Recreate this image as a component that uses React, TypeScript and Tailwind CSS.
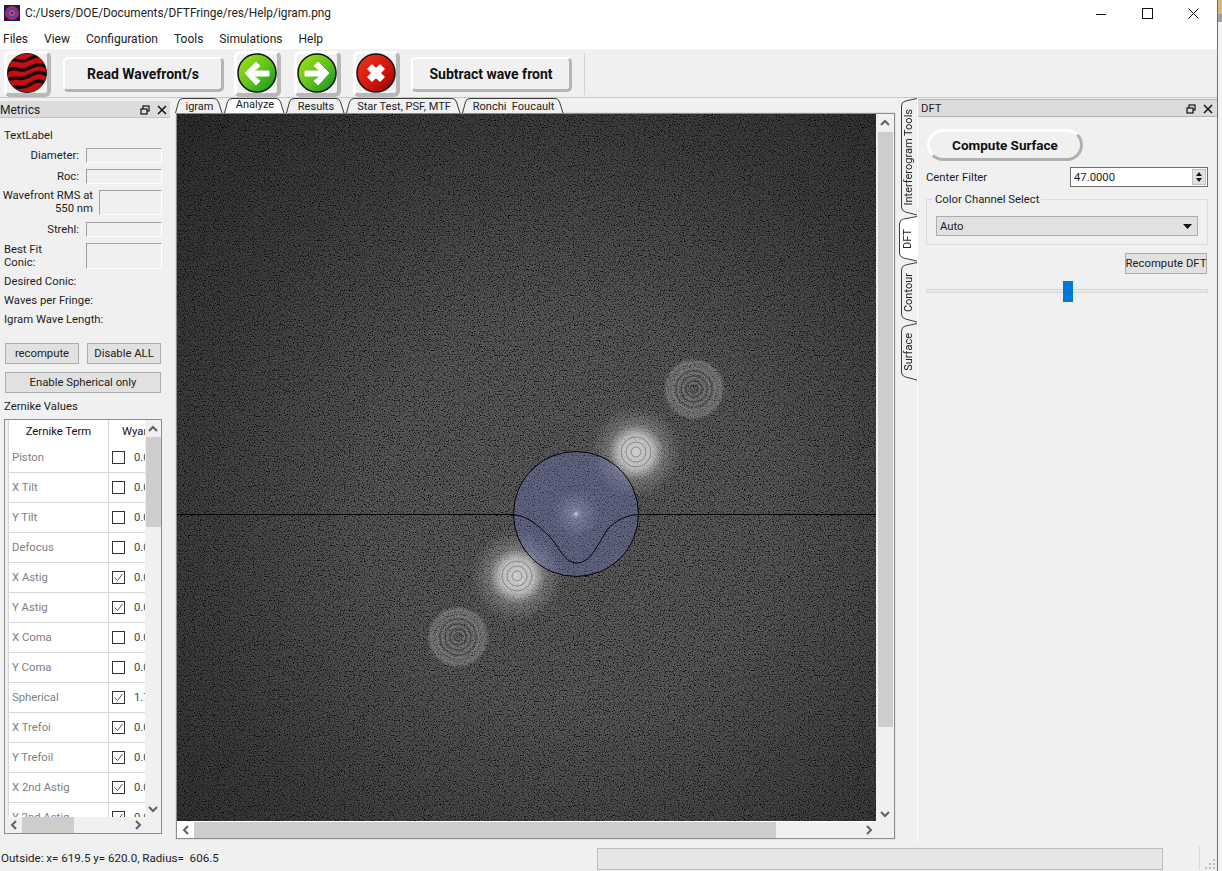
import React from "react";

const tabs = [
  { label: "igram", w: 49, cls: "w-[49px]" },
  { label: "Analyze", w: 62, cls: "w-[62px]", active: true },
  { label: "Results", w: 60, cls: "w-[60px]" },
  { label: "Star Test, PSF, MTF", w: 116, cls: "w-[116px]" },
  { label: "Ronchi  Foucault", w: 103, cls: "w-[103px]" },
];

const sideTabs = [
  { label: "Interferogram Tools", h: 118, cls: "h-[118px]" },
  { label: "DFT", h: 46, cls: "h-[46px]", active: true },
  { label: "Contour", h: 61, cls: "h-[61px]" },
  { label: "Surface", h: 58, cls: "h-[58px]" },
];

const zernike = [
  { name: "Piston", val: "0.0000", on: false },
  { name: "X Tilt", val: "0.0000", on: false },
  { name: "Y Tilt", val: "0.0000", on: false },
  { name: "Defocus", val: "0.0000", on: false },
  { name: "X Astig", val: "0.0000", on: true },
  { name: "Y Astig", val: "0.0000", on: true },
  { name: "X Coma", val: "0.0000", on: false },
  { name: "Y Coma", val: "0.0000", on: false },
  { name: "Spherical", val: "1.7000", on: true },
  { name: "X Trefoi", val: "0.0000", on: true },
  { name: "Y Trefoil", val: "0.0000", on: true },
  { name: "X 2nd Astig", val: "0.0000", on: true },
  { name: "Y 2nd Astig", val: "0.0000", on: true },
];

const Chevron = ({ dir }: { dir: "up" | "down" | "left" | "right" }) => {
  const pts = {
    up: "1,7 5,3 9,7",
    down: "1,3 5,7 9,3",
    left: "7,1 3,5 7,9",
    right: "3,1 7,5 3,9",
  }[dir];
  return (
    <svg width="10" height="10" viewBox="0 0 10 10" className="shrink-0">
      <polyline points={pts} fill="none" stroke="#606060" strokeWidth="2" />
    </svg>
  );
};

const DockIcons = () => (
  <div className="flex items-center gap-[7px]">
    <svg width="10" height="10" viewBox="0 0 10 10">
      <rect x="3" y="1" width="6" height="5" fill="none" stroke="#111" strokeWidth="1.2" />
      <rect x="1" y="4" width="6" height="5" fill="#dcdcdc" stroke="#111" strokeWidth="1.2" />
    </svg>
    <svg width="10" height="10" viewBox="0 0 10 10">
      <path d="M1,1 L9,9 M9,1 L1,9" stroke="#111" strokeWidth="1.5" />
    </svg>
  </div>
);

const Tab = (props: { label: string; w: number; cls: string; active?: boolean }) => {
  const w = props.w;
  return (
    <div className={`relative h-[15px] shrink-0 ${props.cls}`}>
      <svg className="absolute inset-0" width={w} height="15" viewBox={`0 0 ${w} 15`}>
        <path
          d={`M0.5,15 L3.5,4 Q4.5,0.5 8,0.5 L${w - 10},0.5 Q${w - 6.5},0.5 ${w - 5.5},4 L${w - 2},15`}
          fill={props.active ? "#ffffff" : "#f0f0f0"}
          stroke="#3c3c3c"
        />
      </svg>
      <div
        className={`absolute inset-0 flex justify-center text-[11px] whitespace-pre text-[#222] ${
          props.active ? "leading-[14px]" : "leading-[18px]"
        }`}
      >
        {props.label}
      </div>
    </div>
  );
};

const SideTab = (props: { label: string; h: number; cls: string; active?: boolean }) => {
  const h = props.h;
  const x = props.active ? 0.5 : 2.5;
  return (
    <div className={`relative w-[18px] shrink-0 ${props.cls}`}>
      <svg className="absolute inset-0" width="18" height={h} viewBox={`0 0 18 ${h}`}>
        <path
          d={`M18,0.5 L${x + 4},3 Q${x},4 ${x},8 L${x},${h - 9} Q${x},${h - 5} ${x + 4},${h - 4} L18,${h - 1}`}
          fill={props.active ? "#ffffff" : "#f0f0f0"}
          stroke="#3c3c3c"
        />
      </svg>
      <div
        className={`absolute inset-0 flex items-center justify-center text-[11px] text-[#222] ${
          props.active ? "" : "pl-[2px]"
        }`}
      >
        <span className="[writing-mode:vertical-rl] rotate-180 whitespace-nowrap">{props.label}</span>
      </div>
    </div>
  );
};

const Field = ({ cls }: { cls: string }) => (
  <div className={`border-t border-l border-t-[#a0a0a0] border-l-[#a0a0a0] border-b border-r border-b-white border-r-white bg-[#f0f0f0] shrink-0 ${cls}`} />
);

const PushButton = ({ label, cls }: { label: string; cls: string }) => (
  <div className={`flex items-center justify-center h-[21px] bg-[#e1e1e1] border border-[#adadad] text-[#222] whitespace-nowrap ${cls}`}>
    {label}
  </div>
);

const TextTool = ({ label, cls }: { label: string; cls: string }) => (
  <div
    className={`flex items-center justify-center h-[35px] mt-[1px] bg-[#f0f0f0] rounded-[5px] border-t-2 border-l-2 border-t-white border-l-white border-b-[3px] border-r-[3px] border-b-[#b4b4b4] border-r-[#b4b4b4] font-bold text-[14px] text-[#111] ${cls}`}
  >
    {label}
  </div>
);

const IconTool = ({ children }: { children: React.ReactNode }) => (
  <div className="flex items-center justify-center w-[47px] h-[46px] shrink-0 bg-[#f0f0f0] rounded-[6px] border-t-[3px] border-l-[3px] border-t-white border-l-white border-b-[4px] border-r-[4px] border-b-[#b8b8b8] border-r-[#b8b8b8]">
    {children}
  </div>
);

const WaveIcon = () => (
  <svg width="40" height="40" viewBox="0 0 40 40">
    <defs>
      <clipPath id="waveClip">
        <circle cx="20" cy="20" r="19.5" />
      </clipPath>
    </defs>
    <g clipPath="url(#waveClip)">
      <rect width="40" height="40" fill="#c80c10" />
      <path d="M0,9 C8,3 12,11 20,7 S32,1 40,5" stroke="#140404" strokeWidth="3" fill="none" />
      <path d="M0,18 C8,12 12,20 20,16 S32,10 40,14" stroke="#140404" strokeWidth="3.5" fill="none" />
      <path d="M0,28 C6,22 12,28 20,24 S32,17 40,22" stroke="#140404" strokeWidth="3.5" fill="none" />
      <path d="M0,37 C8,31 14,37 22,32 S34,27 40,31" stroke="#140404" strokeWidth="3.5" fill="none" />
    </g>
    <circle cx="20" cy="20" r="19.5" fill="none" stroke="#222" />
  </svg>
);

const RoundIcon = ({ kind }: { kind: "left" | "right" | "stop" }) => {
  const id = `grad-${kind}`;
  const stop = kind === "stop";
  return (
    <svg width="40" height="40" viewBox="0 0 40 40">
      <defs>
        <linearGradient id={id} x1="0" y1="0" x2="1" y2="1">
          <stop offset="0" stopColor={stop ? "#e83a1e" : "#a6e01e"} />
          <stop offset="0.55" stopColor={stop ? "#d8140c" : "#5cc21a"} />
          <stop offset="1" stopColor={stop ? "#8a0606" : "#0a8a2a"} />
        </linearGradient>
      </defs>
      <circle cx="20" cy="20" r="19" fill={`url(#${id})`} stroke="#111" strokeWidth="1.5" />
      {kind === "left" && (
        <path d="M8,20 L19,9 L23,13 L17,18 L32,18 L32,23 L17,23 L23,28 L19,32 Z" fill="#fff" strokeLinejoin="round" stroke="#fff" />
      )}
      {kind === "right" && (
        <path d="M32,20 L21,9 L17,13 L23,18 L8,18 L8,23 L23,23 L17,28 L21,32 Z" fill="#fff" strokeLinejoin="round" stroke="#fff" />
      )}
      {stop && (
        <path d="M12,16 L16,12 L20,16 L24,12 L28,16 L24,20 L28,24 L24,28 L20,24 L16,28 L12,24 L16,20 Z" fill="#fff" stroke="#fff" strokeLinejoin="round" strokeWidth="1.5" />
      )}
    </svg>
  );
};

const AppIcon = () => (
  <svg width="16" height="16" viewBox="0 0 16 16" className="shrink-0">
    <rect width="16" height="16" fill="#1a1a5a" />
    <circle cx="8" cy="8" r="7" fill="#c8242c" />
    <circle cx="8" cy="8" r="5" fill="#3a4ad0" />
    <circle cx="8" cy="8" r="3" fill="#d84860" />
    <circle cx="8" cy="8" r="1.2" fill="#2a2a90" />
  </svg>
);

// FFT picture: noise, vignette, side lobes and the filter circle
const FftView = () => (
  <svg width="699" height="707" viewBox="0 0 699 707" className="block shrink-0">
    <defs>
      <filter id="speckle" x="0" y="0" width="100%" height="100%" colorInterpolationFilters="sRGB">
        <feTurbulence type="fractalNoise" baseFrequency="0.8" numOctaves="2" seed="7" />
        <feColorMatrix values="1 0 0 0 0 1 0 0 0 0 1 0 0 0 0 0 0 0 0 1" />
        <feComponentTransfer>
          <feFuncR type="table" tableValues="0 0 0.05 0.22 0.33 0.37 0.41 0.5 0.6" />
          <feFuncG type="table" tableValues="0 0 0.05 0.22 0.33 0.37 0.41 0.5 0.6" />
          <feFuncB type="table" tableValues="0 0 0.05 0.22 0.33 0.37 0.41 0.5 0.6" />
        </feComponentTransfer>
      </filter>
      <radialGradient id="vignette" cx="399" cy="400" r="560" gradientUnits="userSpaceOnUse">
        <stop offset="0" stopColor="#000" stopOpacity="0" />
        <stop offset="0.35" stopColor="#000" stopOpacity="0.05" />
        <stop offset="0.7" stopColor="#000" stopOpacity="0.32" />
        <stop offset="1" stopColor="#000" stopOpacity="0.5" />
      </radialGradient>
      <radialGradient id="bright">
        <stop offset="0" stopColor="#fff" stopOpacity="0.72" />
        <stop offset="0.35" stopColor="#fff" stopOpacity="0.62" />
        <stop offset="0.6" stopColor="#fff" stopOpacity="0.2" />
        <stop offset="1" stopColor="#fff" stopOpacity="0" />
      </radialGradient>
      <radialGradient id="halo">
        <stop offset="0" stopColor="#fff" stopOpacity="0.06" />
        <stop offset="0.72" stopColor="#fff" stopOpacity="0.14" />
        <stop offset="0.88" stopColor="#fff" stopOpacity="0.2" />
        <stop offset="1" stopColor="#fff" stopOpacity="0" />
      </radialGradient>
      <radialGradient id="core">
        <stop offset="0" stopColor="#fff" stopOpacity="1" />
        <stop offset="0.2" stopColor="#dfe2ff" stopOpacity="0.55" />
        <stop offset="1" stopColor="#c8ccff" stopOpacity="0" />
      </radialGradient>
    </defs>
    <rect width="699" height="707" filter="url(#speckle)" />
    <rect width="699" height="707" fill="url(#vignette)" />

    <circle cx="459" cy="338" r="46" fill="url(#bright)" />
    <circle cx="340" cy="462" r="46" fill="url(#bright)" />
    <circle cx="517" cy="275" r="31" fill="url(#halo)" />
    <circle cx="281" cy="523" r="31" fill="url(#halo)" />
    {[5, 10, 15].map((r) => (
      <g key={r} fill="none" stroke="#303030" strokeOpacity="0.4">
        <circle cx="459" cy="338" r={r} />
        <circle cx="340" cy="462" r={r} />
      </g>
    ))}
    {[4, 8, 13, 18].map((r) => (
      <g key={r} fill="none" stroke="#181818" strokeOpacity="0.4">
        <circle cx="517" cy="275" r={r} />
        <circle cx="281" cy="523" r={r} />
      </g>
    ))}
    {[6, 11, 16, 21].map((r) => (
      <g key={r} fill="none" stroke="#ffffff" strokeOpacity="0.1" strokeWidth="2">
        <circle cx="517" cy="275" r={r} />
        <circle cx="281" cy="523" r={r} />
      </g>
    ))}

    <circle cx="399" cy="400" r="62.5" fill="#7078c8" fillOpacity="0.34" stroke="#000" strokeWidth="1" />
    <circle cx="399" cy="400" r="24" fill="url(#core)" fillOpacity="0.4" />
    <circle cx="399" cy="400" r="3" fill="url(#core)" />
    <path d="M0,400.5 L336,400.5 M462,400.5 L699,400.5" stroke="#000" strokeWidth="1" />
    <path
      d="M336,400.5 C350,402 360,410 373,423 C384,436 388,449 400,449 C412,449 418,436 430,416 C440,405 450,401 462,400.5"
      fill="none"
      stroke="#000"
      strokeWidth="1"
    />
  </svg>
);

export default function App() {
  return (
    <div className="flex w-[1222px] h-[871px] overflow-hidden bg-white font-['Roboto','Liberation_Sans',sans-serif] text-[11.3px] leading-[14px] text-[#1c1c1c]">
      <div className="flex flex-col w-[1217px] shrink-0">
        {/* title bar */}
        <div className="flex items-center h-[26px] pl-[4px] bg-white shrink-0">
          <AppIcon />
          <span className="ml-[5px] text-[11.85px] text-[#222]">C:/Users/DOE/Documents/DFTFringe/res/Help/igram.png</span>
          <div className="ml-auto flex items-center gap-[35px] pr-[18px]">
            <svg width="11" height="11" viewBox="0 0 11 11">
              <path d="M0,6.5 H10" stroke="#111" />
            </svg>
            <svg width="11" height="11" viewBox="0 0 11 11">
              <rect x="0.5" y="0.5" width="10" height="10" fill="none" stroke="#111" />
            </svg>
            <svg width="11" height="11" viewBox="0 0 11 11">
              <path d="M0.5,0.5 L10.5,10.5 M10.5,0.5 L0.5,10.5" stroke="#111" />
            </svg>
          </div>
        </div>

        {/* menu */}
        <div className="flex items-center gap-[16px] h-[23px] pl-[3px] pt-[3px] bg-white text-[12px] text-[#222] shrink-0">
          {["Files", "View", "Configuration", "Tools", "Simulations", "Help"].map((m) => (
            <span key={m}>{m}</span>
          ))}
        </div>
        <div className="h-[1px] bg-[#f4f4f4] shrink-0" />

        {/* toolbar */}
        <div className="flex items-center h-[48px] pl-[4px] bg-[#f0f0f0] border-b border-[#c8c8c8] shrink-0">
          <IconTool>
            <WaveIcon />
          </IconTool>
          <TextTool label="Read Wavefront/s" cls="w-[161px] ml-[12px]" />
          <div className="ml-[10px]">
            <IconTool>
              <RoundIcon kind="left" />
            </IconTool>
          </div>
          <div className="ml-[13px]">
            <IconTool>
              <RoundIcon kind="right" />
            </IconTool>
          </div>
          <div className="ml-[12px]">
            <IconTool>
              <RoundIcon kind="stop" />
            </IconTool>
          </div>
          <TextTool label="Subtract wave front" cls="w-[161px] ml-[11px]" />
          <div className="w-[1px] h-[42px] bg-[#d4d4d4] ml-[12px]" />
        </div>

        {/* main */}
        <div className="flex h-[745px] bg-[#f0f0f0] shrink-0">
          {/* metrics dock */}
          <div className="flex flex-col w-[170px] shrink-0 pt-[3px]">
            <div className="flex items-center justify-between h-[17px] pt-[2px] pr-[3px] bg-[#dcdcdc] border-b border-[#c4c4c4]">
              <span className="text-[12px]">Metrics</span>
              <DockIcons />
            </div>
            <div className="mt-[11px] pl-[4px] h-[14px]">TextLabel</div>
            <div className="mt-[5px] flex items-center pr-[8px]">
              <span className="w-[79px] text-right">Diameter:</span>
              <Field cls="w-[76px] h-[15px] ml-[7px]" />
            </div>
            <div className="mt-[6px] flex items-center pr-[8px]">
              <span className="w-[79px] text-right">Roc:</span>
              <Field cls="w-[76px] h-[15px] ml-[7px]" />
            </div>
            <div className="mt-[5px] flex items-center pr-[8px]">
              <span className="w-[93px] text-right leading-[13px] whitespace-nowrap">
                Wavefront RMS at
                <br />
                550 nm
              </span>
              <Field cls="w-[63px] h-[25px] ml-[6px]" />
            </div>
            <div className="mt-[7px] flex items-center pr-[8px]">
              <span className="w-[79px] text-right">Strehl:</span>
              <Field cls="w-[76px] h-[15px] ml-[7px]" />
            </div>
            <div className="mt-[6px] flex items-center pl-[4px] pr-[8px]">
              <span className="w-[75px] leading-[13px]">
                Best Fit
                <br />
                Conic:
              </span>
              <Field cls="w-[76px] h-[26px] ml-[7px]" />
            </div>
            <div className="mt-[6px] pl-[4px] h-[14px]">Desired Conic:</div>
            <div className="mt-[5px] pl-[4px] h-[14px]">Waves per Fringe:</div>
            <div className="mt-[5px] pl-[4px] h-[14px]">Igram Wave Length:</div>
            <div className="mt-[16px] flex gap-[8px] pl-[5px]">
              <PushButton label="recompute" cls="w-[74px]" />
              <PushButton label="Disable ALL" cls="w-[74px]" />
            </div>
            <PushButton label="Enable Spherical only" cls="mt-[8px] ml-[5px] w-[156px]" />
            <div className="mt-[7px] pl-[4px] h-[14px]">Zernike Values</div>

            {/* zernike table */}
            <div className="mt-[5px] ml-[4px] w-[158px] h-[415px] flex flex-col bg-white border border-[#8c8c8c]">
              <div className="flex h-[397px]">
                <div className="w-[4px] bg-[#f0f0f0] border-r border-[#d8d8d8] shrink-0" />
                <div className="w-[136px] overflow-hidden shrink-0">
                  <div className="flex h-[23px] items-center">
                    <div className="w-[100px] h-full flex items-center justify-center border-r border-[#d8d8d8] shrink-0 text-[#111]">
                      Zernike Term
                    </div>
                    <div className="pl-[13px] text-[#111] whitespace-nowrap">Wyant</div>
                  </div>
                  {zernike.map((z) => (
                    <div key={z.name} className="flex h-[30px] border-b border-[#d8d8d8]">
                      <div className="w-[100px] flex items-center pl-[3px] border-r border-[#d8d8d8] shrink-0 text-[#808080]">
                        {z.name}
                      </div>
                      <div className="flex items-center pl-[3px] whitespace-nowrap">
                        <div className="w-[13px] h-[13px] border border-[#333] flex items-center justify-center shrink-0">
                          {z.on && (
                            <svg width="11" height="11" viewBox="0 0 11 11">
                              <path d="M1.5,5.5 L4.5,8.5 L9.5,2" fill="none" stroke="#555" strokeWidth="1" />
                            </svg>
                          )}
                        </div>
                        <span className="ml-[9px] text-[#444]">{z.val}</span>
                      </div>
                    </div>
                  ))}
                </div>
                <div className="flex flex-col items-center w-[16px] bg-[#f0f0f0] shrink-0">
                  <div className="h-[17px] flex items-center justify-center">
                    <Chevron dir="up" />
                  </div>
                  <div className="w-[15px] h-[90px] bg-[#cdcdcd]" />
                  <div className="mt-auto h-[17px] flex items-center justify-center">
                    <Chevron dir="down" />
                  </div>
                </div>
              </div>
              <div className="flex items-center h-[16px] bg-[#f0f0f0] shrink-0">
                <div className="w-[17px] flex justify-center">
                  <Chevron dir="left" />
                </div>
                <div className="w-[52px] h-full bg-[#cdcdcd]" />
                <div className="ml-auto w-[28px] flex justify-start">
                  <Chevron dir="right" />
                </div>
              </div>
            </div>
          </div>

          {/* central tabs */}
          <div className="flex flex-col w-[725px] shrink-0 pl-[5px]">
            <div className="flex h-[15px] shrink-0">
              {tabs.map((t) => (
                <Tab key={t.label} {...t} />
              ))}
            </div>
            <div className="ml-[1px] w-[719px] h-[726px] flex flex-col bg-white border border-[#8c8c8c] outline outline-[#e2e2e2]">
              <div className="flex h-[708px]">
                <FftView />
                <div className="flex flex-col items-center w-[18px] bg-[#f0f0f0] shrink-0">
                  <div className="h-[18px] flex items-center justify-center">
                    <Chevron dir="up" />
                  </div>
                  <div className="w-[15px] h-[595px] bg-[#cdcdcd]" />
                  <div className="mt-auto h-[16px] flex items-center justify-center">
                    <Chevron dir="down" />
                  </div>
                </div>
              </div>
              <div className="flex items-center h-[16px] bg-[#f0f0f0] shrink-0">
                <div className="w-[17px] flex justify-center bg-white h-full items-center">
                  <Chevron dir="left" />
                </div>
                <div className="w-[582px] h-full bg-[#cdcdcd]" />
                <div className="ml-auto w-[30px] flex justify-start">
                  <Chevron dir="right" />
                </div>
              </div>
            </div>
          </div>

          {/* side tabs */}
          <div className="flex flex-col w-[22px] shrink-0 pl-[4px]">
            {sideTabs.map((t) => (
              <SideTab key={t.label} {...t} />
            ))}
          </div>

          {/* dft dock */}
          <div className="flex flex-col w-[300px] shrink-0 pt-[1px] border-l border-white">
            <div className="flex items-center justify-between h-[18px] pt-[1px] pl-[3px] pr-[4px] bg-[#dcdcdc] border-y border-[#b4b4b4]">
              <span>DFT</span>
              <DockIcons />
            </div>
            <div className="mt-[12px] ml-[9px] w-[156px] h-[32px] flex items-center justify-center rounded-full bg-[#f0f0f0] border-t-[3px] border-l-[3px] border-t-white border-l-white border-b-[3px] border-r-[3px] border-b-[#b0b0b0] border-r-[#b0b0b0] font-bold text-[13.5px] text-[#111]">
              Compute Surface
            </div>
            <div className="mt-[6px] ml-[8px] flex items-center justify-between w-[282px]">
              <span className="pt-[1px]">Center Filter</span>
              <div className="flex items-center w-[138px] h-[20px] pl-[3px] pr-[1px] bg-white border border-[#6e6e6e]">
                <span className="pt-[1px]">47.0000</span>
                <div className="ml-auto flex flex-col items-center justify-center w-[14px] h-[16px] bg-[#e1e1e1] border border-[#c0c0c0]">
                  <svg width="8" height="12" viewBox="0 0 8 12">
                    <path d="M4,1 L7,5 L1,5 Z M4,11 L7,7 L1,7 Z" fill="#111" />
                  </svg>
                </div>
              </div>
            </div>
            <div className="relative mt-[12px] ml-[8px] w-[282px] h-[46px] px-[9px] pt-[16px] border border-[#dcdcdc]">
              <span className="absolute left-[6px] top-[-7px] px-[2px] bg-[#f0f0f0]">Color Channel Select</span>
              <div className="flex items-center justify-between h-[20px] pl-[3px] pr-[5px] bg-[#e1e1e1] border border-[#adadad]">
                <span className="pt-[1px]">Auto</span>
                <svg width="9" height="5" viewBox="0 0 9 5">
                  <path d="M0,0 H9 L4.5,5 Z" fill="#111" />
                </svg>
              </div>
            </div>
            <div className="mt-[8px] ml-[207px] w-[82px]">
              <PushButton label="Recompute DFT" cls="w-[82px]" />
            </div>
            <div className="relative mt-[15px] ml-[8px] w-[282px] h-[4px] bg-[#e7eae7] border border-[#d6d6d6]">
              <div className="absolute left-[136px] top-[-9px] w-[10px] h-[21px] bg-[#0078d7]" />
            </div>
          </div>
        </div>

        {/* status bar */}
        <div className="flex items-center h-[28px] bg-[#f0f0f0] shrink-0">
          <span className="ml-[1px] mt-[2px] w-[596px] whitespace-pre text-[11.6px]">Outside: x= 619.5 y= 620.0, Radius=  606.5</span>
          <div className="w-[566px] h-[22px] mt-[4px] bg-[#e6e6e6] border border-[#bdbdbd]" />
          <div className="ml-[36px] w-[1px] h-[24px] mt-[2px] bg-[#d8d8d8]" />
          <svg width="10" height="10" viewBox="0 0 10 10" className="ml-[5px] mt-[14px]">
            <path d="M8,0 h2 v2 h-2 Z M4,4 h2 v2 h-2 Z M8,4 h2 v2 h-2 Z M0,8 h2 v2 h-2 Z M4,8 h2 v2 h-2 Z M8,8 h2 v2 h-2 Z" fill="#bdbdbd" />
          </svg>
        </div>
      </div>

      {/* edge of the desktop behind the window */}
      <div className="w-[1px] bg-[#2a7fd0] shrink-0" />
      <div className="flex flex-col w-[4px] shrink-0 bg-[#f4f4f4]">
        <div className="h-[14px] bg-[#d9b878]" />
        <div className="h-[8px] bg-[#a0a0a0]" />
      </div>
    </div>
  );
}
